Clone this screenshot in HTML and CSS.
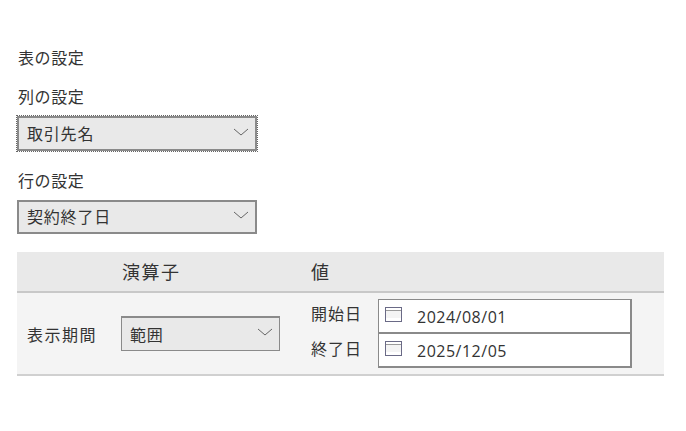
FILE: index.html
```html
<!DOCTYPE html>
<html lang="ja">
<head>
    <meta charset="UTF-8">
    <meta name="viewport" content="width=device-width, initial-scale=1.0">
    <title>表の設定</title>
    <link rel="stylesheet" href="styles.css">
</head>
<body>
    <div class="container">
        <div class="page-title">表の設定</div>

        <div class="field-label label-first">列の設定</div>
        <div class="select select-focus">
            <span>取引先名</span>
            <svg class="chevron" width="16" height="8" viewBox="0 0 16 8"><path d="M1 1 L8 7 L15 1" fill="none" stroke="#666" stroke-width="1"/></svg>
        </div>

        <div class="field-label label-second">行の設定</div>
        <div class="select select-plain">
            <span>契約終了日</span>
            <svg class="chevron" width="16" height="8" viewBox="0 0 16 8"><path d="M1 1 L8 7 L15 1" fill="none" stroke="#666" stroke-width="1"/></svg>
        </div>

        <div class="filter-table">
            <div class="table-head">
                <div class="head-operator">演算子</div>
                <div class="head-value">値</div>
            </div>
            <div class="table-row">
                <div class="row-name">表示期間</div>
                <div class="select select-range">
                    <span>範囲</span>
                    <svg class="chevron" width="16" height="8" viewBox="0 0 16 8"><path d="M1 1 L8 7 L15 1" fill="none" stroke="#666" stroke-width="1"/></svg>
                </div>
                <div class="date-list">
                    <div class="date-row">
                        <div class="date-label">開始日</div>
                        <div class="date-input">
                            <svg class="calendar" width="17" height="15" viewBox="0 0 17 15"><rect x="1" y="3" width="15" height="8" fill="#f4f4f4"/><rect x="0.5" y="0.5" width="16" height="14" fill="none" stroke="#6a6a86"/><path d="M1 3.5 H16" stroke="#9a9a9a"/></svg>
                            <span class="date-text">2024/08/01</span>
                        </div>
                    </div>
                    <div class="date-row">
                        <div class="date-label">終了日</div>
                        <div class="date-input">
                            <svg class="calendar" width="17" height="15" viewBox="0 0 17 15"><rect x="1" y="3" width="15" height="8" fill="#f4f4f4"/><rect x="0.5" y="0.5" width="16" height="14" fill="none" stroke="#6a6a86"/><path d="M1 3.5 H16" stroke="#9a9a9a"/></svg>
                            <span class="date-text">2025/12/05</span>
                        </div>
                    </div>
                </div>
            </div>
        </div>
    </div>
</body>
</html>
```

FILE: styles.css
```css
body {
    font-family: "Noto Sans CJK JP", "Open Sans", sans-serif;
    font-size: 16px;
    color: #333;
    background-color: #fff;
    margin: 0;
}
.container {
    padding: 46px 22px 0 17px;
}
.page-title,
.field-label {
    height: 22px;
    line-height: 22px;
    letter-spacing: 0.6px;
    padding-left: 1px;
}
.label-first {
    margin-top: 17px;
    margin-bottom: 9px;
}
.label-second {
    margin-top: 18px;
    margin-bottom: 9px;
}
.select {
    box-sizing: border-box;
    display: flex;
    align-items: center;
    justify-content: space-between;
    background-color: #e9e9e9;
    border: 2px solid #8a8a8a;
    padding: 0 6px 1px 8px;
    letter-spacing: 0.8px;
}
.select-plain {
    width: 240px;
    height: 34px;
}
.select-plain span {
    margin-bottom: 1px;
}
.select-focus {
    width: 240px;
    height: 35px;
    outline: 1px dotted #666;
}
.select-range {
    width: 159px;
    height: 35px;
    margin-left: 14px;
    border-width: 1px;
    border-top-width: 2px;
}
.chevron {
    margin-bottom: 3px;
    flex: none;
}
.filter-table {
    width: 647px;
    margin-top: 18px;
}
.table-head {
    display: flex;
    align-items: center;
    height: 37px;
    padding-left: 105px;
    padding-bottom: 2px;
    background-color: #e9e9e9;
    border-bottom: 2px solid #c8c8c8;
    font-size: 18px;
    letter-spacing: 1.5px;
}
.head-operator {
    width: 189px;
}
.table-row {
    display: flex;
    align-items: center;
    height: 81px;
    background-color: #f4f4f4;
    border-bottom: 2px solid #d0d0d0;
}
.row-name {
    width: 80px;
    padding-left: 10px;
    letter-spacing: 1.5px;
}
.date-list {
    display: flex;
    flex-direction: column;
    margin-left: 31px;
}
.date-row {
    display: flex;
    align-items: center;
}
.date-label {
    width: 67px;
    letter-spacing: 1px;
    padding-bottom: 7px;
}
.date-input {
    box-sizing: border-box;
    display: flex;
    align-items: center;
    width: 254px;
    height: 35px;
    background-color: #fff;
    border: solid #8a8a8a;
    border-width: 1px 2px 2px 1px;
    padding-left: 6px;
    font-family: "Open Sans", sans-serif;
    font-size: 16px;
    letter-spacing: 0.5px;
}
.date-row + .date-row .date-input {
    margin-top: -1px;
}
.date-text {
    padding-top: 2px;
}
.calendar {
    margin-bottom: 3px;
    margin-right: 15px;
    flex: none;
}
```
